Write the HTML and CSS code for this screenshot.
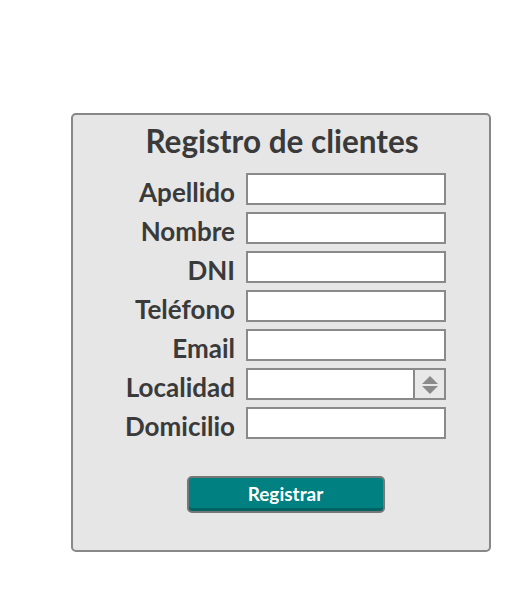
FILE: index.html
```html
<!DOCTYPE html>
<html lang="es">
<head>
<meta charset="utf-8">
<title>Registro de clientes</title>
<link rel="stylesheet" href="styles.css">
</head>
<body>
<form class="card">
  <h1 class="title">Registro de clientes</h1>
  <div class="fields">
    <label class="label" for="apellido">Apellido</label>
    <input class="field" id="apellido" type="text">
    <label class="label" for="nombre">Nombre</label>
    <input class="field" id="nombre" type="text">
    <label class="label" for="dni">DNI</label>
    <input class="field" id="dni" type="text">
    <label class="label" for="telefono">Teléfono</label>
    <input class="field" id="telefono" type="text">
    <label class="label" for="email">Email</label>
    <input class="field" id="email" type="text">
    <label class="label" for="localidad">Localidad</label>
    <div class="field spin">
      <span class="spin-value" id="localidad"></span>
      <span class="spin-btn">
        <svg width="16" height="18" viewBox="0 0 16 18"><path d="M8 0 L16 8 L0 8 Z M0 10 L16 10 L8 18 Z" fill="#8a8a8a"/></svg>
      </span>
    </div>
    <label class="label" for="domicilio">Domicilio</label>
    <input class="field" id="domicilio" type="text">
  </div>
  <div class="actions">
    <button class="btn" type="button">Registrar</button>
  </div>
</form>
</body>
</html>
```
FILE: styles.css
```css
html, body {
  margin: 0;
  padding: 0;
  background: #ffffff;
}
body {
  font-family: Lato, "Noto Sans", sans-serif;
  color: #3a3a3a;
}
.card {
  box-sizing: border-box;
  width: 420px;
  margin: 113px 0 0 71px;
  padding: 10px 0 37px;
  border: 2px solid #888888;
  border-radius: 5px;
  background: #e6e6e6;
}
.title {
  margin: 0 0 16px;
  font-size: 31.5px;
  line-height: 32px;
  font-weight: 700;
  text-align: center;
  color: #3a3a3a;
  padding-left: 2px;
}
.fields {
  display: grid;
  grid-template-columns: 110px 200px;
  grid-auto-rows: 32px;
  column-gap: 11px;
  row-gap: 7px;
  padding-left: 52px;
}
.label {
  font-size: 26px;
  font-weight: 700;
  line-height: 32px;
  text-align: right;
  padding-top: 3px;
  white-space: nowrap;
}
.field {
  box-sizing: border-box;
  width: 200px;
  height: 32px;
  margin: 0;
  border: 2px solid #8a8a8a;
  background: #ffffff;
  border-radius: 0;
  outline: none;
  font: inherit;
}
.spin {
  display: flex;
}
.spin-value {
  flex: 1;
}
.spin-btn {
  box-sizing: border-box;
  width: 31px;
  border-left: 2px solid #8a8a8a;
  background: #e8e8e8;
  display: flex;
  align-items: center;
  justify-content: center;
  padding-top: 1px;
}
.actions {
  display: flex;
  justify-content: center;
  padding-top: 37px;
  padding-left: 9px;
}
.btn {
  box-sizing: border-box;
  width: 198px;
  height: 37px;
  border: 2px solid #777777;
  border-radius: 5px;
  background: #008080;
  box-shadow: inset 0 -3px 0 #006464;
  color: #ffffff;
  font-family: Lato, "Noto Sans", sans-serif;
  font-size: 19px;
  font-weight: 700;
  padding: 0 0 2px;
}
```
